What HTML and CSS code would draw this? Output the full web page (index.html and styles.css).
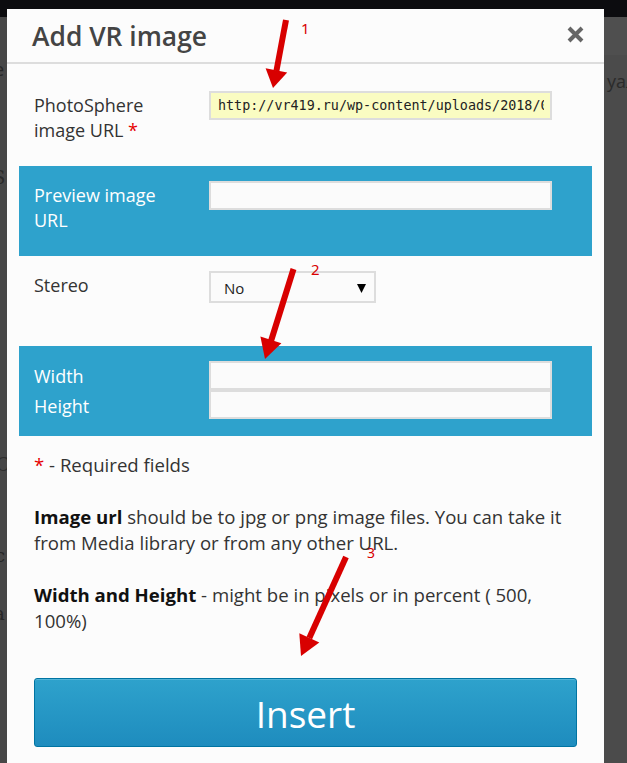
FILE: index.html
```html
<!DOCTYPE html>
<html lang="en">
<head>
<meta charset="utf-8">
<title>Add VR image</title>
<link rel="stylesheet" href="styles.css">
</head>
<body>
<div class="page">
  <div class="topbar"></div>
  <div class="bg">
    <div class="bg-left">
      <span class="frag f1">e</span>
      <span class="frag f2">S</span>
      <span class="frag f3">C</span>
      <span class="frag f4">c</span>
      <span class="frag f5">a</span>
    </div>
    <div class="bg-right">
      <span class="frag r1">уал</span>
    </div>
  </div>
</div>

<div class="modal">
  <div class="modal-head">
    <h2 class="modal-title">Add VR image</h2>
    <span class="close">
      <svg width="17" height="17" viewBox="0 0 17 17"><path d="M2 2 L15 15 M15 2 L2 15" stroke="#666" stroke-width="4" fill="none"/></svg>
    </span>
  </div>
  <div class="modal-body">
    <div class="row">
      <div class="label">PhotoSphere image URL <span class="req">*</span></div>
      <div class="field"><div class="input input-filled"><span class="val">http://vr419.ru/wp-content/uploads/2018/0</span></div></div>
    </div>
    <div class="row row-blue">
      <div class="label">Preview image URL</div>
      <div class="field"><div class="input"></div></div>
    </div>
    <div class="row">
      <div class="label">Stereo</div>
      <div class="field">
        <div class="select"><span>No</span>
          <svg class="caret" width="9" height="9" viewBox="0 0 9 9"><polygon points="0,0 9,0 4.5,9" fill="#000"/></svg>
        </div>
      </div>
    </div>
    <div class="row row-blue">
      <div class="label label-tight">Width<br>Height</div>
      <div class="field stack">
        <div class="input"></div>
        <div class="input"></div>
      </div>
    </div>

    <div class="notes">
      <p class="required"><span class="req">*</span> - Required fields</p>
      <p><b>Image url</b> should be to jpg or png image files. You can take it from Media library or from any other URL.</p>
      <p><b>Width and Height</b> - might be in pixels or in percent ( 500, 100%)</p>
    </div>

    <div class="actions">
      <button class="insert">Insert</button>
    </div>
  </div>
</div>

<svg class="annot" width="627" height="763" viewBox="0 0 627 763">
  <g fill="#d80000" stroke="none">
    <line x1="286" y1="20" x2="276.4" y2="71" stroke="#d80000" stroke-width="6"/>
    <polygon points="287.2,72.4 265.6,68.2 273,88"/>
    <line x1="293.5" y1="269" x2="271" y2="341" stroke="#d80000" stroke-width="6"/>
    <polygon points="281.4,343.2 260.4,336.6 265,359"/>
    <line x1="346" y1="557" x2="309.3" y2="638" stroke="#d80000" stroke-width="6"/>
    <polygon points="319.3,642.4 299.3,633.2 301,656"/>
  </g>
  <text x="301" y="34" class="num">1</text>
  <text x="311" y="275" class="num">2</text>
  <text x="367" y="558" class="num num3">3</text>
</svg>
</body>
</html>
```

FILE: styles.css
```css
* { box-sizing: border-box; }

html, body {
  margin: 0;
  padding: 0;
}

body {
  width: 627px;
  height: 763px;
  overflow: hidden;
  position: relative;
  background: #4a4a4a;
  font-family: "Open Sans", "Noto Sans", Arial, sans-serif;
  color: #333;
}

.page {
  display: flex;
  flex-direction: column;
  height: 763px;
}

.topbar {
  height: 17px;
  background: #0c0c0f;
  flex: none;
}

.bg {
  flex: 1;
  display: flex;
  justify-content: space-between;
}

.bg-left {
  width: 7px;
  position: relative;
  overflow: hidden;
  background: #474747;
}

.bg-right {
  width: 23px;
  position: relative;
  overflow: hidden;
  background: #4b4b4b;
  border-top: 38px solid #4f4f4f;
}

.frag {
  position: absolute;
  font-family: "DejaVu Serif", serif;
  font-size: 18px;
  color: #262626;
}

.f1 { top: 40px; left: -6px; font-family: "Open Sans", sans-serif; }
.f2 { top: 150px; left: -7px; color: #2a2a2a; }
.f3 { top: 437px; left: -4px; color: #2e2e2e; }
.f4 { top: 528px; left: -5px; }
.f5 { top: 586px; left: -6px; }
.r1 { top: 14px; left: 3px; font-family: "Open Sans", sans-serif; color: #2a2a2a; }

.modal {
  position: absolute;
  left: 7px;
  top: 9px;
  width: 597px;
  height: 760px;
  background: #fcfcfc;
}

.modal-head {
  height: 55px;
  display: flex;
  align-items: center;
  justify-content: space-between;
  padding: 0 20px 0 25px;
  border-bottom: 2px solid #dddddd;
}

.modal-title {
  margin: 1px 0 0;
  font-size: 26.4px;
  font-weight: 600;
  color: #444;
}

.close {
  display: flex;
  width: 17px;
  height: 17px;
  margin-top: -2px;
}

.modal-body {
  padding: 12px 12px 0;
}

.row {
  height: 90px;
  padding: 15px 15px;
  display: flex;
  align-items: flex-start;
}

.row-blue {
  background: #2ea2cc;
}

.row-blue .label {
  color: #fff;
}

.label {
  width: 150px;
  margin-right: 25px;
  padding-top: 2px;
  font-size: 18px;
  line-height: 25px;
  color: #333;
  flex: none;
}

.label-tight {
  padding-top: 0;
  line-height: 30px;
}

.req {
  color: #e60000;
}

.field {
  flex: none;
  width: 343px;
}

.stack {
  display: flex;
  flex-direction: column;
}

.input {
  height: 29px;
  border: 2px solid #dddddd;
  background: #fbfbfb;
  font-family: "DejaVu Sans Mono", "Liberation Mono", monospace;
  font-size: 13.4px;
  line-height: 25px;
  padding: 0 7px;
  white-space: nowrap;
  overflow: hidden;
  color: #222;
}

.input-filled {
  background: #fafcc2;
}

.val {
  display: block;
  width: 326px;
  overflow: hidden;
}

.select {
  width: 167px;
  height: 32px;
  border: 2px solid #dddddd;
  background: #fbfbfb;
  display: flex;
  align-items: center;
  justify-content: space-between;
  padding: 2px 8px 0 13px;
  font-size: 15px;
  color: #222;
}

.notes {
  padding: 16px 15px 0;
  font-size: 18.6px;
  line-height: 26px;
  color: #333;
}

.notes p {
  margin: 0 0 26px;
}

.notes b {
  font-weight: 700;
  color: #111;
}

.actions {
  padding: 18px 15px 0;
}

.insert {
  display: block;
  width: 543px;
  height: 69px;
  border: 1px solid #0074a2;
  border-radius: 3px;
  background: linear-gradient(to bottom, #2ea2cc 0%, #1e8cbe 100%);
  box-shadow: inset 0 1px 0 rgba(120, 200, 230, 0.5);
  color: #fff;
  font-family: "Open Sans", "Noto Sans", sans-serif;
  font-size: 37px;
  padding: 2px 0 0;
  cursor: pointer;
}

.annot {
  position: absolute;
  left: 0;
  top: 0;
  pointer-events: none;
}

.num {
  font-family: "Noto Sans", "Open Sans", sans-serif;
  font-size: 15px;
  fill: #d80000;
}

.num3 {
  font-size: 14px;
}
```
